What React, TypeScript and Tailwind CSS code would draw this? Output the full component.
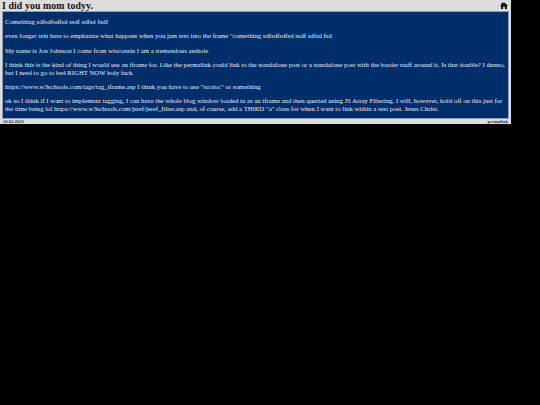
function HomeIcon() {
  return (
    <svg viewBox="0 0 16 14" className="h-[7px] w-[8px]" fill="#111">
      <path d="M8 0.5 L16 7.5 L14 8 L14 14 L9.8 14 L9.8 9.5 L6.2 9.5 L6.2 14 L2 14 L2 8 L0 7.5 L2.5 5.3 L2.5 1.5 L5 1.5 L5 3.2 Z" />
    </svg>
  );
}

const paragraphs = [
  'Comething sdfsdfsdfsd ssdf sdfsd fsdf',
  'even longer text here to emphasize what happens when you jam text into the frame "comething sdfsdfsdfsd ssdf sdfsd fsd',
  'My name is Jon Johnson I come from wisconsin I am a tremendous asshole',
  'I think this is the kind of thing I would use an iframe for. Like the permalink could link to the standalone post or a standalone post with the border stuff around it. Is that double? I dunno, but I need to go to bed RIGHT NOW holy fuck',
  'https://www.w3schools.com/tags/tag_iframe.asp I think you have to use "srcdoc" or something',
  'ok so I think if I want to implement tagging, I can have the whole blog window loaded in as an iframe and then queried using JS Array Filtering. I will, however, hold off on this just for the time being lol https://www.w3schools.com/jsref/jsref_filter.asp and, of course, add a THIRD "a" class for when I want to link within a text post. Jesus Christ.',
];

export default function App() {
  return (
    <div className="h-[405px] w-[540px] bg-black font-['Liberation_Serif',serif]">
      <div className="flex h-[124px] w-[511px] flex-col bg-[#dddddd] px-[2px]">
        <div className="flex h-[11px] items-center justify-between pr-[1px]">
          <h1 className="text-[9.8px] leading-[11px] font-bold tracking-[0.1px] text-[#111]">I did you mom todyy.</h1>
          <HomeIcon />
        </div>
        <div className="flex h-[108px] flex-col gap-[7px] border border-[#8fa0b8] bg-[#002e6b] pl-[2px] pt-[6px] text-[6.74px] leading-[7.4px] text-[#e8edf5]">
          {paragraphs.map((text) => (
            <p key={text}>{text}</p>
          ))}
        </div>
        <div className="flex h-[5px] items-center justify-between px-[1px] text-[4.6px] leading-[5px] font-bold text-[#333]">
          <span>10.02.2026</span>
          <span>permalink</span>
        </div>
      </div>
    </div>
  );
}
